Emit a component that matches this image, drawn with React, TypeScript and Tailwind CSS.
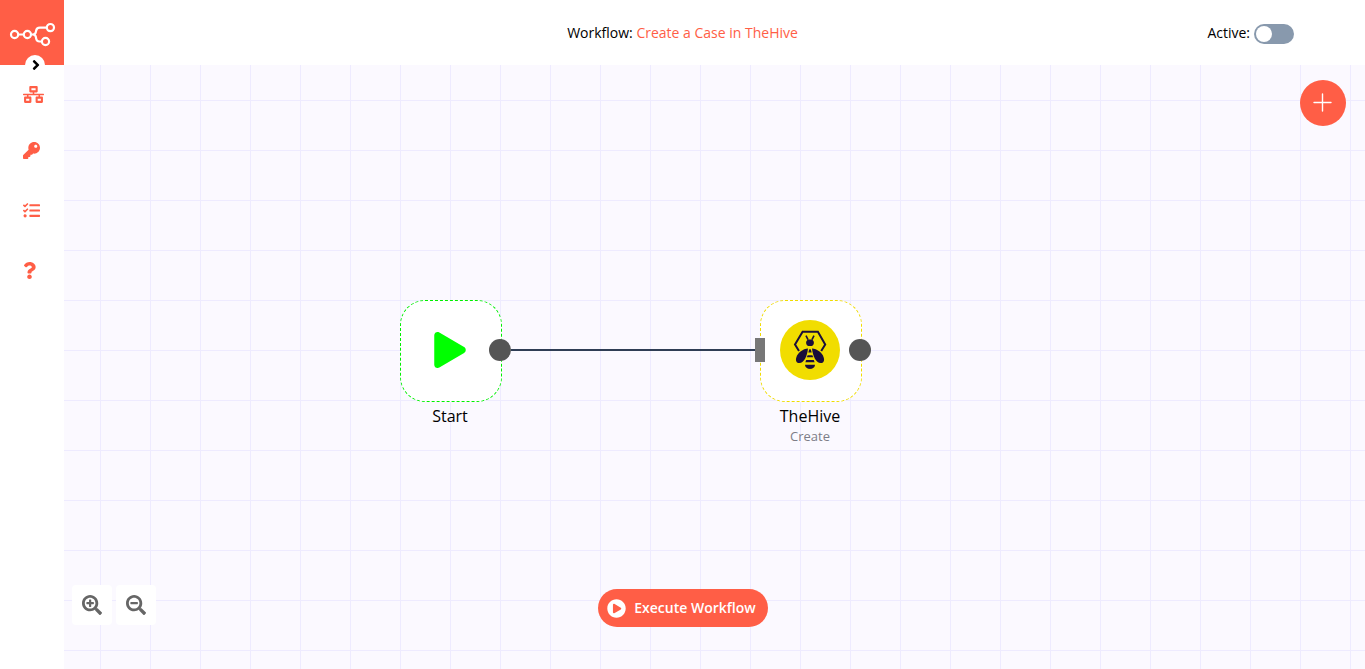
import type { ReactNode } from "react";
import {
  FaAngleRight,
  FaKey,
  FaNetworkWired,
  FaPlay,
  FaPlayCircle,
  FaQuestion,
  FaSearchMinus,
  FaSearchPlus,
  FaTasks,
} from "react-icons/fa";

function Logo() {
  return (
    <svg width="48" height="26" viewBox="9 22 48 26" fill="none" stroke="#fff" strokeWidth="2.2" aria-hidden="true">
      <circle cx="14.6" cy="34.5" r="3.6" />
      <circle cx="27.4" cy="34.5" r="3.6" />
      <circle cx="50.4" cy="27.6" r="3.6" />
      <circle cx="45.5" cy="41.5" r="3.6" />
      <path d="M18.3 34.5h5.4M31.1 34.5h1.6c1.9 0 3-1 3.2-2.6l.2-1.2c.3-2 1.700-3.100 3.800-3.100h6.800M32.700 34.500c1.900 0 3 1 3.200 2.600l.2 1.300c.3 2 1.600 3.100 3.400 3.100h2.300" />
    </svg>
  );
}

function BeeLogo() {
  return (
    <svg width="60" height="60" viewBox="0 0 60 60" aria-hidden="true">
      <circle cx="30" cy="30" r="30" fill="#f1dd00" />
      <path d="M19 31l-4-6.500 7.600-12.700h15.300L45.200 24.500 41.200 31" fill="none" stroke="#1a0e3a" strokeWidth="2" />
      <path d="M26 15.700l2 4M34 15.700l-2 4" stroke="#1a0e3a" strokeWidth="1.600" />
      <g fill="#1a0e3a">
        <path d="M28 19.400h4c1.300.8 1.900 2 1.900 3.300 0 1.900-1.200 3.300-2.400 3.300h-3c-1.200 0-2.400-1.400-2.400-3.300 0-1.300.6-2.500 1.900-3.300z" />
        <path d="M28 28.600c-5 .2-10.200 4.200-11.700 8.800-1 3.200.2 5.700 3 5.700 5 0 7.900-7.400 8.700-14.500z" />
        <path d="M32 28.600c5 .2 10.200 4.200 11.700 8.800 1 3.200-.2 5.700-3 5.700-5 0-7.900-7.400-8.700-14.500z" />
        <path d="M29.300 29.200h1.400l1 3.300h-3.400z" />
        <path d="M27.600 35.200h4.800l.8 2h-6.400z" />
        <path d="M26.200 40h7.600l.8 2.200h-9.200z" />
        <path d="M25 44.800h10c0 2.400-2.500 4.200-5 4.200s-5-1.800-5-4.200z" />
      </g>
    </svg>
  );
}

function NavItem({ label, className, children }: { label: string; className: string; children: ReactNode }) {
  return (
    <li>
      <a href="#" aria-label={label} className={`flex items-center text-[#ff5e46] ${className}`}>
        {children}
      </a>
    </li>
  );
}

function NodeCard({
  title,
  subtitle,
  className,
  boxClassName,
  children,
}: {
  title: string;
  subtitle?: string;
  className: string;
  boxClassName: string;
  children: ReactNode;
}) {
  return (
    <div className={`absolute flex w-[100px] flex-col items-center ${className}`}>
      <div className={`-mr-0.5 size-[102px] rounded-[25px] border border-dashed bg-white ${boxClassName}`}>
        <div className="flex size-[98px] items-center justify-center">{children}</div>
      </div>
      <span className="absolute top-[39px] -right-[11px] size-[22px] rounded-full bg-[#555]" />
      <div className="mt-0.5 text-base leading-6 text-black">{title}</div>
      {subtitle && <div className="text-[13px] leading-4 text-[#7d7d87]">{subtitle}</div>}
    </div>
  );
}

export default function App() {
  return (
    <div className="flex min-h-screen flex-col bg-white font-['Open_Sans',sans-serif] text-black">
      <header className="grid h-[65px] grid-cols-[1fr_auto_1fr] items-center">
        <div className="relative flex h-full w-16 items-center justify-center bg-[#ff5e46] pt-1 pl-0.5">
          <Logo />
          <button
            type="button"
            aria-label="Expand menu"
            className="absolute -bottom-2.5 left-[25px] flex size-5 items-center justify-center rounded-full bg-white pl-0.5 text-base"
          >
            <FaAngleRight className="shrink-0" />
          </button>
        </div>
        <h1 className="text-sm">
          Workflow:{" "}
          <a href="#" className="text-[#ff5e46]">
            Create a Case in TheHive
          </a>
        </h1>
        <label className="flex items-center gap-1 justify-self-end pr-[71px] text-sm">
          Active:
          <input
            type="checkbox"
            className="mt-0.5 h-5 w-10 appearance-none rounded-full bg-[#8899ad] p-0.5 before:block before:size-4 before:rounded-full before:bg-white checked:bg-[#13ce66] checked:before:translate-x-5"
          />
        </label>
      </header>

      <div className="flex flex-1">
        <nav aria-label="Main" className="w-16 shrink-0 pt-[3px]">
          <ul>
            <NavItem label="Workflows" className="h-[52px] pl-[23px] text-[21px]">
              <FaNetworkWired />
            </NavItem>
            <NavItem label="Credentials" className="h-[60px] pl-[23px] text-[17px]">
              <FaKey />
            </NavItem>
            <NavItem label="Executions" className="h-[60px] pl-[23px] text-[17px]">
              <FaTasks />
            </NavItem>
            <NavItem label="Help" className="h-[60px] pl-[21px] text-[17px]">
              <FaQuestion />
            </NavItem>
          </ul>
        </nav>

        <main className="relative flex-1 overflow-hidden bg-[#fbf9ff] bg-[linear-gradient(to_right,#eeebff_1px,transparent_1px),linear-gradient(to_bottom,#eeebff_1px,transparent_1px)] bg-size-[50px_50px] bg-position-[36px_35px]">
          <NodeCard title="Start" className="top-[235px] left-[336px]" boxClassName="border-[#00f000]">
            <FaPlay className="size-9 text-[#00ff00]" />
          </NodeCard>
          <NodeCard title="TheHive" subtitle="Create" className="top-[235px] left-[696px]" boxClassName="border-[#f0dc00]">
            <BeeLogo />
          </NodeCard>
          <span className="absolute top-[284px] left-[447px] h-0.5 w-[244px] bg-[#2f3d55]" />
          <span className="absolute top-[273px] left-[691px] h-6 w-2.5 bg-[#777]" />

          <button
            type="button"
            aria-label="Add node"
            className="absolute top-[15px] right-[19px] flex size-[46px] items-center justify-center rounded-full bg-[#ff5e46] text-white"
          >
            <svg width="20" height="20" viewBox="0 0 20 20" stroke="currentColor" strokeWidth="1.4" strokeLinecap="round" aria-hidden="true">
              <path d="M9.500 1v17M1 9.500h17" />
            </svg>
          </button>

          <div className="absolute inset-x-0 bottom-[42px] flex justify-center pr-16">
            <button
              type="button"
              className="flex h-[38px] w-[170px] items-center justify-center gap-2 rounded-full bg-[#ff5e46] pr-0.5 text-sm font-semibold text-white"
            >
              <FaPlayCircle className="size-[19px]" />
              Execute Workflow
            </button>
          </div>
          <div className="absolute bottom-11 left-2 flex gap-1 text-xl text-[#666]">
            <button type="button" aria-label="Zoom in" className="flex size-10 items-center justify-center rounded-sm bg-white">
              <FaSearchPlus />
            </button>
            <button type="button" aria-label="Zoom out" className="flex size-10 items-center justify-center rounded-sm bg-white">
              <FaSearchMinus />
            </button>
          </div>
        </main>
      </div>
    </div>
  );
}
